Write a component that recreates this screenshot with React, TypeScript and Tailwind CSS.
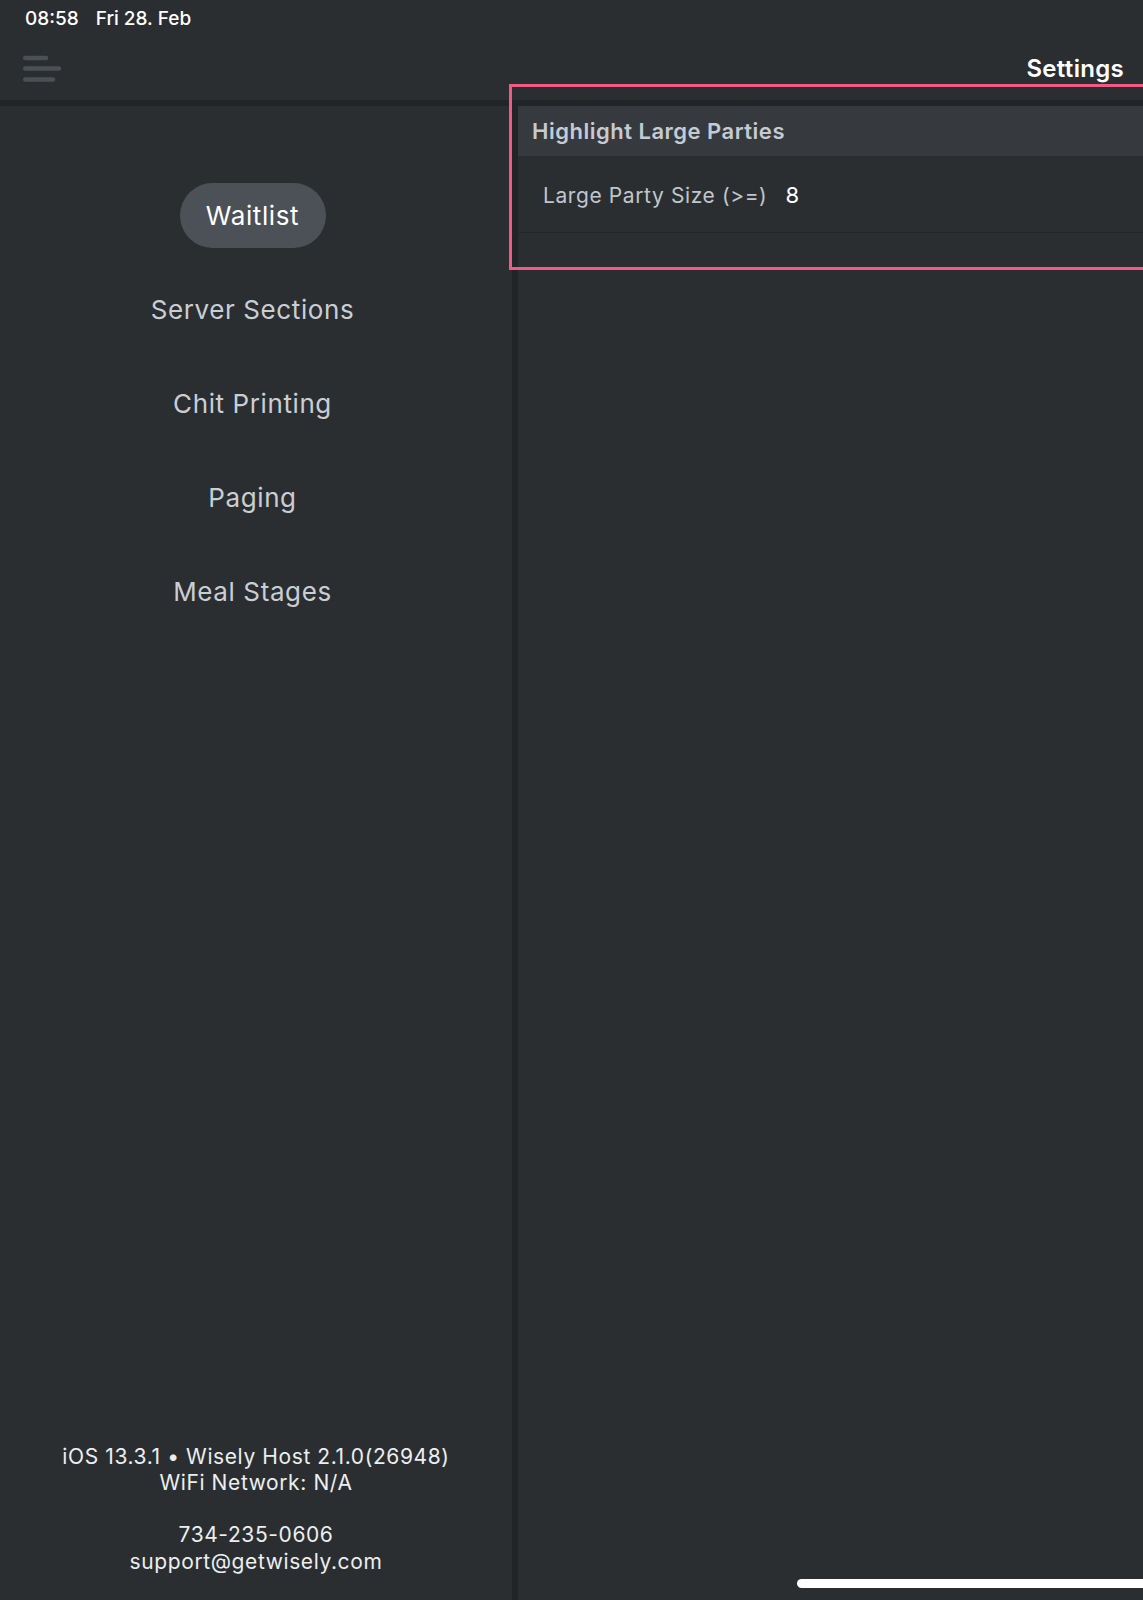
import React from "react";

const navItems = ["Waitlist", "Server Sections", "Chit Printing", "Paging", "Meal Stages"];

export default function App() {
  return (
    <div
      className="relative w-full h-[1600px] overflow-hidden bg-[#2b2e31] flex flex-col"
      style={{ fontFamily: "Inter, 'Noto Sans', sans-serif" }}
    >
      {/* Header */}
      <header className="h-[100px] flex flex-col shrink-0">
        <div className="h-[37px] pl-[25px] pt-[7px] flex gap-[17px] text-[19px] leading-[23px] font-medium text-white">
          <span>08:58</span>
          <span>Fri 28. Feb</span>
        </div>
        <div className="flex-1 flex items-start justify-between pl-[21px] pr-[19px]">
          <svg width="42" height="28" viewBox="0 0 42 28" className="mt-[17px]" fill="none">
            <line x1="4.25" y1="4" x2="25" y2="4" stroke="#4b5056" strokeWidth="4.5" strokeLinecap="round" />
            <line x1="4.25" y1="14.5" x2="38" y2="14.5" stroke="#4b5056" strokeWidth="4.5" strokeLinecap="round" />
            <line x1="4.25" y1="25.5" x2="32" y2="25.5" stroke="#4b5056" strokeWidth="4.5" strokeLinecap="round" />
          </svg>
          <span className="mt-[17px] text-[24px] leading-[29px] font-semibold tracking-[0.3px] text-white">Settings</span>
        </div>
      </header>
      <div className="h-[6px] bg-[#222527] shrink-0" />

      {/* Main */}
      <div className="flex-1 flex">
        {/* Sidebar */}
        <aside className="w-[512px] shrink-0 flex flex-col">
          <nav className="mt-[77px] flex flex-col items-center gap-[29px] pr-[7px]">
            {navItems.map((item, i) =>
              i === 0 ? (
                <div
                  key={item}
                  className="h-[65px] w-[146px] rounded-full bg-[#4b5157] flex items-center justify-center text-[26px] tracking-[0.6px] text-white"
                >
                  {item}
                </div>
              ) : (
                <div
                  key={item}
                  className="h-[65px] flex items-center justify-center text-[26px] tracking-[0.6px] text-[#c9ced5]"
                >
                  {item}
                </div>
              )
            )}
          </nav>
          <div className="mt-auto pb-[25px] flex flex-col items-center text-[21px] tracking-[0.6px] leading-[26.3px] text-[#eceef0]">
            <span>iOS 13.3.1 • Wisely Host 2.1.0(26948)</span>
            <span>WiFi Network: N/A</span>
            <span>&nbsp;</span>
            <span>734-235-0606</span>
            <span>support@getwisely.com</span>
          </div>
        </aside>

        {/* Divider */}
        <div className="w-[6px] shrink-0 bg-[#222527]" />

        {/* Content */}
        <section className="flex-1 flex flex-col">
          <div className="h-[50px] bg-[#363a3e] pl-[14px] pt-[1px] flex items-center text-[22px] tracking-[0.5px] font-semibold text-[#c5cbd2]">
            Highlight Large Parties
          </div>
          <div className="h-[77px] pl-[25px] pt-[3px] flex items-center border-b border-[#24272a]">
            <span className="text-[21px] tracking-[0.6px] text-[#c0c6cc]">Large Party Size (&gt;=)</span>
            <span className="ml-[18px] text-[22px] text-white">8</span>
          </div>
        </section>
      </div>

      {/* Annotation rectangle */}
      <div className="absolute left-[509px] top-[84px] right-[-10px] h-[186px] border-[3px] border-[#ef5a86]" />

      {/* Home indicator */}
      <div className="absolute left-[797px] top-[1579px] w-[500px] h-[9px] rounded-full bg-white" />
    </div>
  );
}
